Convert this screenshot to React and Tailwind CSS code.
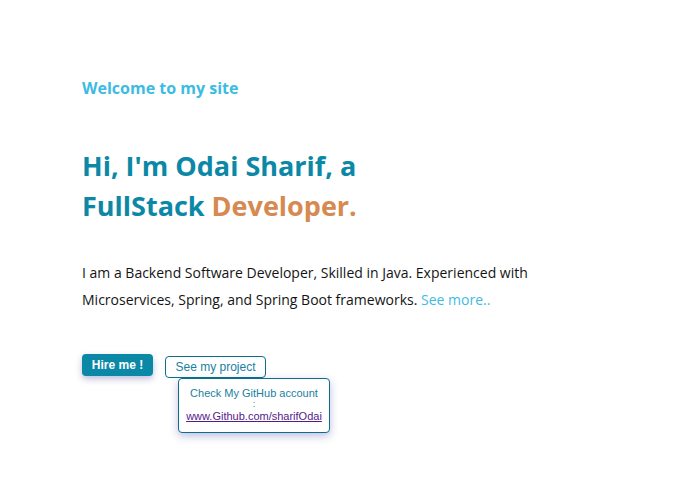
export default function App() {
    return (
        <div className="min-h-[483px] w-full bg-white pl-[82px] pt-[77px]" style={{ fontFamily: '"Open Sans", sans-serif' }}>
            <h3 className="text-[16px] font-bold leading-[22px] text-[#3dbbe3]">Welcome to my site</h3>

            <h1 className="mt-[47px] text-[27px] font-bold leading-[40px] text-[#0c88a7]">
                Hi, I'm Odai Sharif, a
                <br />
                FullStack <span className="text-[#d68a51]">Developer.</span>
            </h1>

            <p className="mt-[33px] w-[480px] text-[14px] leading-[27px] text-[#141414]">
                I am a Backend Software Developer, Skilled in Java. Experienced with Microservices, Spring, and Spring Boot frameworks.{' '}
                <span className="cursor-pointer text-[#3dbbe3]">See more..</span>
            </p>

            <div className="mt-[41px] flex items-start gap-[12px]" style={{ fontFamily: '"Liberation Sans", Arial, sans-serif' }}>
                <button className="h-[22px] w-[71px] rounded-[4px] bg-[#0c88a7] text-[12px] font-bold text-white shadow-[0_3px_6px_rgba(40,40,140,0.3)]">
                    Hire me !
                </button>
                <div className="relative">
                    <button className="h-[22px] w-[101px] rounded-[4px] border border-[#0c6f8a] bg-white text-[12px] text-[#1a7fa0]">
                        See my project
                    </button>
                    <div className="absolute left-[13px] top-[24px] w-[152px] rounded-[4px] border border-[#0c6f8a] bg-white px-1 pb-[10px] pt-[8px] text-center text-[11px] leading-[12px] text-[#1a7fa0] shadow-[0_3px_8px_rgba(40,40,160,0.3)]">
                        <div>Check My GitHub account</div>
                        <div className="text-[9px] leading-[11px]">:</div>
                        <a href="#" className="text-[#551a8b] underline">www.Github.com/sharifOdai</a>
                    </div>
                </div>
            </div>
        </div>
    );
}
